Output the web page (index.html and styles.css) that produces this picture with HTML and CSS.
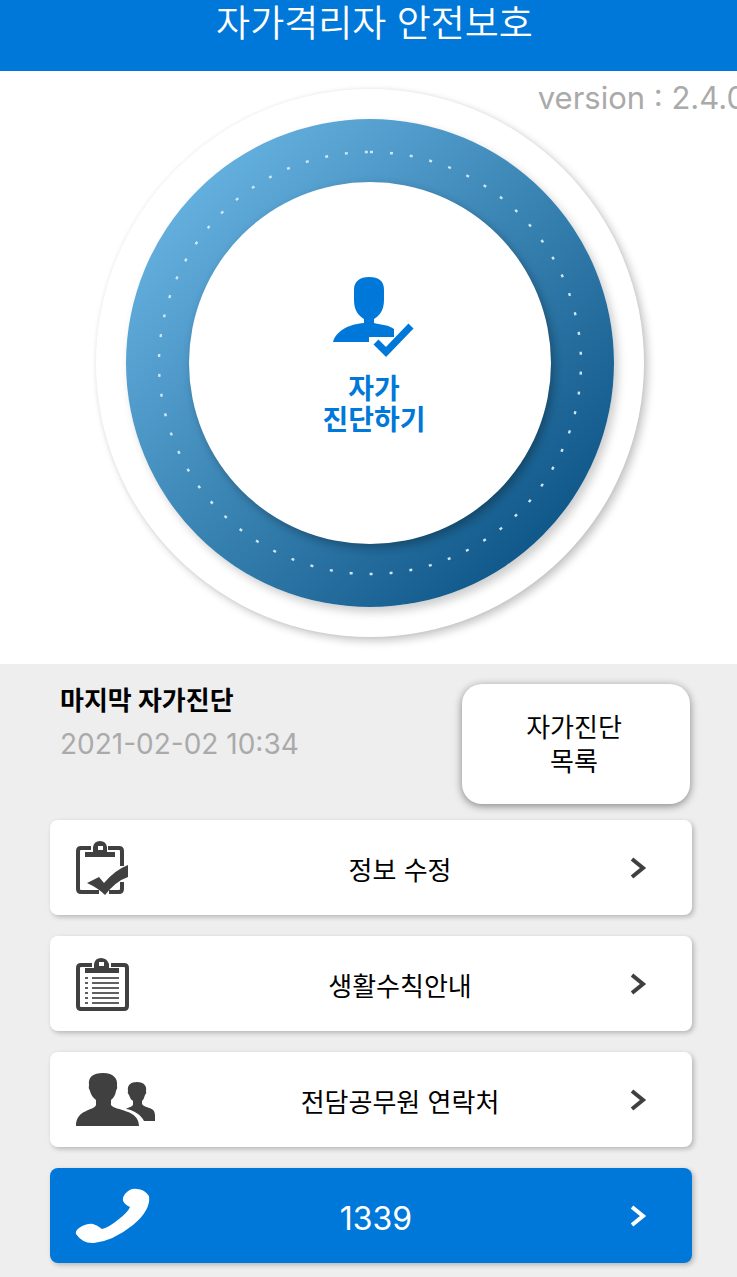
FILE: index.html
```html
<!DOCTYPE html>
<html lang="ko">
<head>
  <meta charset="utf-8">
  <title>자가격리자 안전보호</title>
  <meta name="viewport" content="width=device-width, initial-scale=1.0">
  <link rel="stylesheet" href="styles.css">
</head>
<body>
  <header class="header">
    <h1>자가격리자 안전보호</h1>
  </header>

  <section class="hero">
    <span class="version">version : 2.4.0</span>
    <div class="dial">
      <div class="ring">
        <svg class="dots" viewBox="0 0 488 488" aria-hidden="true">
          <circle cx="244" cy="244" r="211" fill="none" stroke="#cfe6f3" stroke-width="2.4" stroke-dasharray="3 17" transform="rotate(-90 244 244)"/>
        </svg>
        <button class="check-btn">
          <svg width="82" height="82" viewBox="0 0 82 82" aria-hidden="true">
            <path fill="#0078d9" d="M36 1C46 1 51 5 51 14V24C51 35 46 40 41 43V47C49 49 56 49 61 53V61H36V66H0C3 55 16 48 31 47V43C26 40 21 35 21 24V14C21 5 27 1 36 1Z"/>
            <path fill="none" stroke="#0078d9" stroke-width="7" d="M43 66L53 76L78 50"/>
          </svg>
          <span>자가<br>진단하기</span>
        </button>
      </div>
    </div>
  </section>

  <section class="panel">
    <div class="last">
      <div class="last-info">
        <h2>마지막 자가진단</h2>
        <time datetime="2021-02-02T10:34">2021-02-02 10:34</time>
      </div>
      <button class="list-btn">자가진단<br>목록</button>
    </div>

    <nav class="menu">
      <a class="row" href="#edit">
        <span class="icon">
          <svg width="56" height="58" viewBox="0 0 56 58" aria-hidden="true">
            <path fill="none" stroke="#404040" stroke-width="4" d="M16 9H6Q3 9 3 12V50Q3 53 6 53H24M33 9H44Q47 9 47 12V27M47 43V50Q47 53 44 53H34"/>
            <path fill="#404040" fill-rule="evenodd" d="M10 13H18V8Q19 2 25 2T32 8V13H40V18H10ZM23 7V11H28V7Z"/>
            <path fill="#404040" d="M12 44L24 38L29 44Q40 31 53 26V38Q41 42 30 56Q23 49 12 44Z"/>
          </svg>
        </span>
        <span class="label">정보 수정</span>
        <svg class="arrow" width="16" height="22" viewBox="0 0 16 22" aria-hidden="true"><path d="M1 2L12 11L1 20"/></svg>
      </a>
      <a class="row" href="#rules">
        <span class="icon">
          <svg width="56" height="58" viewBox="0 0 56 58" aria-hidden="true">
            <path fill="none" stroke="#404040" stroke-width="4" d="M17 10H6Q3 10 3 13V51Q3 54 6 54H49Q52 54 52 51V13Q52 10 49 10H36"/>
            <path fill="#404040" fill-rule="evenodd" d="M10 13H19V9Q20 3 26 3T34 9V13H44V18H10ZM24 7V11H29V7Z"/>
            <path fill="none" stroke="#606060" stroke-width="2" d="M10 23H13M17 23H44M10 28H13M17 28H44M10 33H13M17 33H44M10 38H13M17 38H44M10 43H13M17 43H44M10 48H13M17 48H44"/>
          </svg>
        </span>
        <span class="label">생활수칙안내</span>
        <svg class="arrow" width="16" height="22" viewBox="0 0 16 22" aria-hidden="true"><path d="M1 2L12 11L1 20"/></svg>
      </a>
      <a class="row" href="#contact">
        <span class="icon">
          <svg width="80" height="58" viewBox="0 0 80 58" aria-hidden="true">
            <path fill="#404040" d="M28 2C39 2 43 8 42 15Q43 17 41 20Q40 26 36 29V34C40 40 64 38 64 55H1C1 38 19 40 21 34V29Q16 25 15 20Q13 17 14 14C13 6 18 2 28 2Z"/>
            <path fill="#404040" d="M62 11C69 11 72 15 71 20Q72 22 70 24Q69 28 67 30V33C70 38 80 35 80 44V50H69C66 44 59 39 51 38C54 36 58 36 58 33V30Q55 28 54 24Q52 22 53 20C52 14 56 11 62 11Z"/>
          </svg>
        </span>
        <span class="label">전담공무원 연락처</span>
        <svg class="arrow" width="16" height="22" viewBox="0 0 16 22" aria-hidden="true"><path d="M1 2L12 11L1 20"/></svg>
      </a>
      <a class="row row-call" href="tel:1339">
        <span class="icon">
          <svg width="76" height="58" viewBox="0 0 76 58" aria-hidden="true">
            <path fill="#fff" d="M50 7Q55 1 62 2Q69 2 74 9Q76 23 58 38Q38 54 19 56Q8 57 1 47Q0 44 4 41Q12 36 18 37Q22 38 27 42Q33 41 44 32Q53 25 55 20Q44 15 50 7Z"/>
          </svg>
        </span>
        <span class="label">1339</span>
        <svg class="arrow" width="16" height="22" viewBox="0 0 16 22" aria-hidden="true"><path d="M1 2L12 11L1 20"/></svg>
      </a>
    </nav>
  </section>
</body>
</html>
```
FILE: styles.css
```css
body {
  margin: 0;
  font-family: Inter, 'Noto Sans CJK KR', sans-serif;
  background: #fff;
  color: #000;
  overflow-x: hidden;
}

button {
  border: none;
  background: #fff;
  font-family: inherit;
  cursor: pointer;
}

.header {
  background: #0078d9;
  padding-bottom: 23px;
}

.header h1 {
  margin: 0;
  padding-left: 12px;
  color: #fff;
  font-size: 37px;
  font-weight: 350;
  line-height: 48px;
  text-align: center;
}

.hero {
  position: relative;
  display: flex;
  justify-content: center;
  padding: 18px 0 27px 3px;
  overflow: hidden;
}

.version {
  position: absolute;
  top: 7px;
  right: -9px;
  color: #aaa;
  font-size: 31px;
  line-height: 40px;
  white-space: nowrap;
}

.dial {
  box-sizing: border-box;
  width: 548px;
  max-width: 100%;
  aspect-ratio: 1;
  padding: 30px;
  border-radius: 50%;
  background: #fff;
  box-shadow: 4px 4px 8px rgba(0, 0, 0, 0.22), 0 0 4px rgba(0, 0, 0, 0.06);
}

.ring {
  position: relative;
  box-sizing: border-box;
  height: 100%;
  padding: 63px;
  border-radius: 50%;
  background: linear-gradient(135deg, #68b4e3 10%, #0b5384 90%);
  box-shadow: 4px 5px 10px rgba(0, 0, 0, 0.2);
}

.dots {
  position: absolute;
  top: 0;
  left: 0;
  width: 100%;
  height: 100%;
}

.check-btn {
  position: relative;
  display: flex;
  flex-direction: column;
  align-items: center;
  justify-content: center;
  gap: 16px;
  width: 100%;
  height: 100%;
  padding: 0 0 14px 8px;
  border-radius: 50%;
  box-shadow: 3px 4px 10px rgba(0, 0, 0, 0.3);
  color: #0078d9;
  font-size: 28px;
  font-weight: 700;
  line-height: 31px;
}

.panel {
  background: #eee;
  padding: 20px 45px 14px 50px;
}

.last {
  display: flex;
  justify-content: space-between;
  padding: 0 2px 0 10px;
  margin-bottom: 16px;
}

.last h2 {
  margin: 0;
  font-size: 26px;
  font-weight: 700;
  line-height: 34px;
}

.last time {
  display: block;
  margin-top: 6px;
  color: #aaa;
  font-size: 28px;
  line-height: 40px;
}

.list-btn {
  width: 228px;
  height: 120px;
  padding: 2px 4px 0 0;
  border-radius: 20px;
  box-shadow: 0 2px 8px rgba(0, 0, 0, 0.45);
  color: #000;
  font-size: 26px;
  line-height: 34px;
}

.menu {
  display: flex;
  flex-direction: column;
  gap: 21px;
}

.row {
  display: flex;
  align-items: center;
  box-sizing: border-box;
  height: 95px;
  padding: 0 45px 0 25px;
  border-radius: 8px;
  background: #fff;
  box-shadow: 2px 2px 5px rgba(0, 0, 0, 0.24);
  color: #000;
  text-decoration: none;
}

.icon {
  display: flex;
  width: 94px;
}

.label {
  flex: 1;
  padding-top: 6px;
  font-size: 26px;
  line-height: 34px;
  text-align: center;
}

.arrow {
  fill: none;
  stroke: #404040;
  stroke-width: 4;
}

.row-call {
  background: #0078d9;
  color: #fff;
}

.row-call .label {
  padding-right: 48px;
  font-size: 32px;
}

.row-call .arrow {
  stroke: #fff;
}

@media (max-width: 600px) {
  .panel {
    padding: 20px 16px;
  }

  .list-btn {
    width: 140px;
  }
}
```
